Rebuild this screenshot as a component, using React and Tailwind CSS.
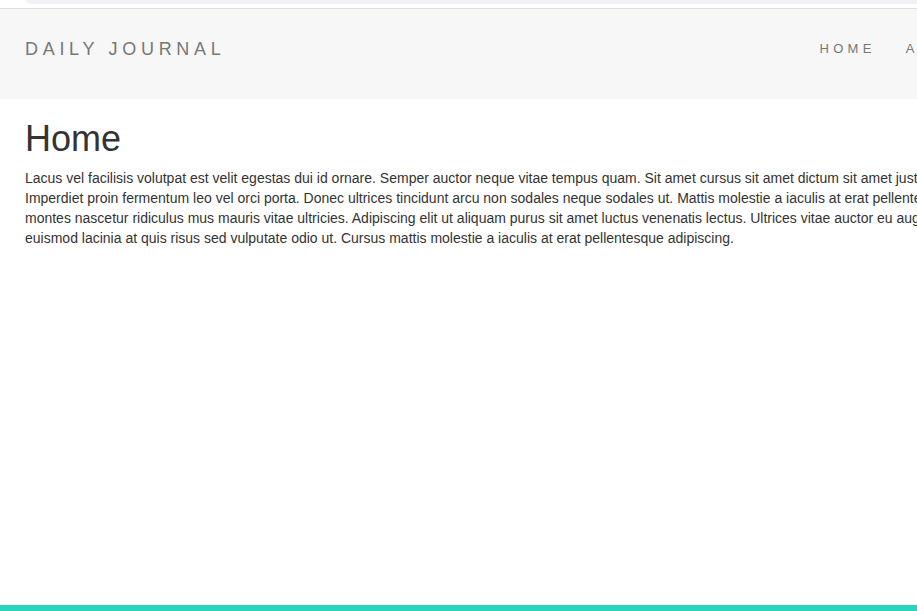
export default function App() {
  const lines = [
    "Lacus vel facilisis volutpat est velit egestas dui id ornare. Semper auctor neque vitae tempus quam. Sit amet cursus sit amet dictum sit amet justo donec enim diam vulputate.",
    "Imperdiet proin fermentum leo vel orci porta. Donec ultrices tincidunt arcu non sodales neque sodales ut. Mattis molestie a iaculis at erat pellentesque adipiscing commodo.",
    "montes nascetur ridiculus mus mauris vitae ultricies. Adipiscing elit ut aliquam purus sit amet luctus venenatis lectus. Ultrices vitae auctor eu augue ut lectus arcu bibendum.",
    "euismod lacinia at quis risus sed vulputate odio ut. Cursus mattis molestie a iaculis at erat pellentesque adipiscing.",
  ];
  return (
    <div
      className="w-[917px] h-[611px] overflow-hidden bg-white flex flex-col text-[#333]"
      style={{ fontFamily: '"Liberation Sans", Arial, sans-serif' }}
    >
      <div className="h-[8px] shrink-0 relative bg-white">
        <div className="absolute left-[24px] right-0 top-[-6px] h-[10px] rounded-bl-[8px] bg-[#f1f1f3]" />
      </div>
      <header className="h-[91px] shrink-0 border-t border-[#dedede] bg-[#f7f7f7] flex items-center justify-between pl-[25px] pb-[11px]">
        <div className="text-[18px] tracking-[4.7px] text-[#777] leading-none">DAILY JOURNAL</div>
        <nav className="flex items-center gap-[30px] text-[13px] tracking-[4.3px] text-[#777] whitespace-nowrap mr-[-55px]">
          <span>HOME</span>
          <span>ABOUT</span>
        </nav>
      </header>
      <main className="flex-1 px-[25px] pt-[20px]">
        <h1 className="text-[36px] leading-[40px] text-[#333]">Home</h1>
        <div className="mt-[9px] text-[14px] leading-[20px] text-[#333]">
          {lines.map((l, i) => (
            <div key={i} className="whitespace-nowrap">{l}</div>
          ))}
        </div>
      </main>
      <div className="h-[6px] shrink-0 bg-[#2bd4c0]" />
    </div>
  );
}
